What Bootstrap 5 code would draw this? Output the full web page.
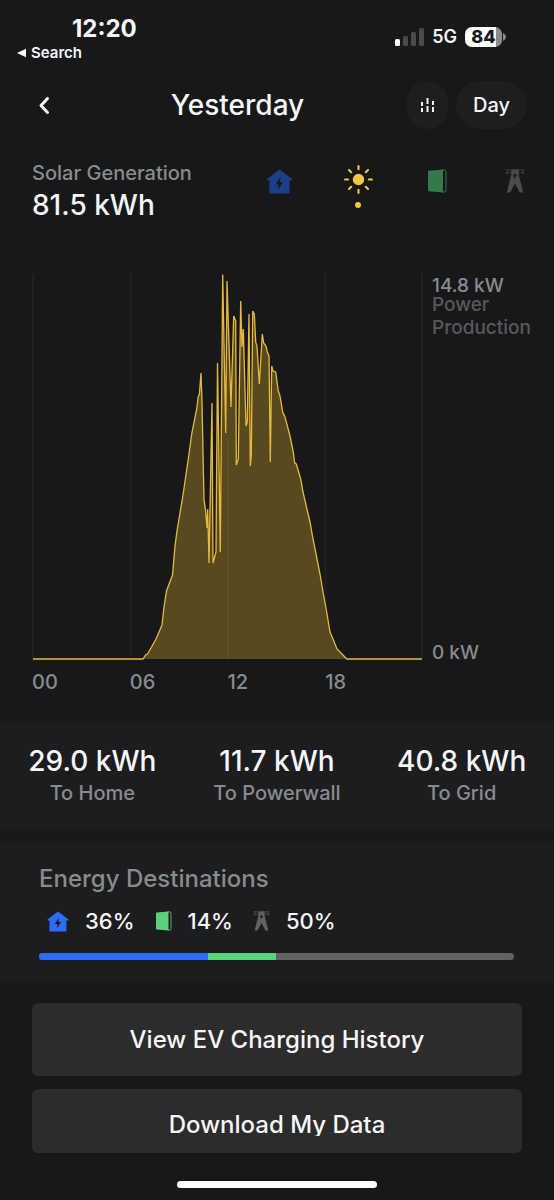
<!DOCTYPE html>
<html lang="en">
<head>
<meta charset="utf-8">
<meta name="viewport" content="width=device-width, initial-scale=1">
<title>Solar Generation</title>
<link href="https://cdn.jsdelivr.net/npm/bootstrap@5.3.0/dist/css/bootstrap.min.css" rel="stylesheet">
<style>
  :root { --ink: #f6f6f7; --dim: #8a8b8d; --faint: #58595b; --panel: #1c1d1f; --sun: #f4c443; }
  body { background: #17181a; color: var(--ink); font-family: Inter, "Liberation Sans", sans-serif; font-weight: 500; }
  svg { display: block; }
  .dim { color: var(--dim); }
  .faint { color: var(--faint); }
  .status { padding: 17px 48px 0 16px; }
  .clock { font-size: 24px; line-height: 24px; font-weight: 700; padding-left: 56px; }
  .back-app { font-size: 15px; line-height: 24px; font-weight: 600; color: var(--ink); }
  .net { font-size: 18px; line-height: 20px; font-weight: 600; }
  .battery { width: 37px; height: 20px; border-radius: 7px; background: linear-gradient(90deg, #fff 84%, #8c8c8e 84%); color: #17181a; font-size: 18px; line-height: 20px; font-weight: 800; }
  .nub { margin-left: 1px; }
  .topbar { display: grid; grid-template-columns: 36px 1fr auto; padding: 16px 27px 0 32px; }
  .topbar h1 { font-size: 28px; line-height: 48px; font-weight: 500; }
  .pill { height: 48px; border-radius: 24px; background: #1d1e20; color: var(--ink); font-size: 20px; font-weight: 500; border: 0; }
  .pill:hover { background: #2c2c2c; color: var(--ink); }
  .pill-icon { width: 41px; }
  .pill-day { width: 71px; }
  .summary { padding: 32px 0 0 32px; }
  .label-md { font-size: 20px; line-height: 24px; }
  .value { font-size: 28px; line-height: 40px; }
  .sources { width: 60%; }
  .source { flex: 1 1 0; border: 0; background: none; height: 56px; }
  .off { opacity: .55; }
  .dot { width: 6px; height: 6px; border-radius: 50%; background: var(--sun); }
  .chart { display: grid; grid-template-columns: 1fr 122px; column-gap: 9px; padding: 49px 0 0 32px; }
  .scale { font-size: 19px; line-height: 23px; padding-top: 5px; }
  .scale .edge { line-height: 14px; }
  .hours { font-size: 20px; line-height: 24px; padding-top: 10px; }
  .panel { background: var(--panel); }
  .totals { margin-top: 29px; padding: 18px 0 24px; }
  .dest { margin-top: 14px; padding: 23px 40px 23px 39px; }
  .dest h2 { font-size: 24px; line-height: 26px; }
  .share { font-size: 22px; line-height: 28px; margin-top: 15px; }
  .share-next { margin-left: 20px; }
  .split { height: 7px; border-radius: 4px; background: #626262; margin-top: 18px; }
  .actions { padding: 20px 32px 28px; row-gap: 13px; }
  .act { background: #2c2c2c; color: var(--ink); border: 0; border-radius: 6px; font-size: 24px; font-weight: 500; line-height: 22px; padding: 26px 12px 25px; }
  .act:hover { background: #363636; color: var(--ink); }
  .act-short { padding: 25px 12px 17px; }
  .homebar { width: 36%; height: 7px; border-radius: 4px; background: #fff; margin-bottom: 10px; }
</style>
</head>
<body>
<svg width="0" height="0" class="position-absolute" aria-hidden="true">
  <symbol id="house" viewBox="0 0 24 24"><path fill="currentColor" fill-rule="evenodd" d="M12 .5 24 9.600v1.200h-2.400V23.500H2.200V10.800H0V9.600ZM13.200 7.500 8.300 14.800h3.100l-.8 5 5-7.300h-3.200Z"/></symbol>
  <symbol id="wall" viewBox="0 0 20 24"><path fill="currentColor" d="M1 2.600Q1 1.900 1.800 1.800L16 .6V23.400L1.800 22.200Q1 22.100 1 21.400Z"/><path fill="none" stroke="currentColor" stroke-width="1" d="M15 1h2.200q1.800 0 1.800 1.800v18.400q0 1.800-1.800 1.800H15"/></symbol>
  <symbol id="tower" viewBox="0 0 20 24"><path fill="currentColor" fill-rule="evenodd" d="M6.300.5h7.400v5.200L18.300 23.500h-3.600L10 14.500 5.300 23.500H1.700L6.300 5.700ZM10.800 2.800 7.600 7.600h2l-.6 3.200 3.200-4.800h-2Z"/><path stroke="currentColor" stroke-width=".7" d="M.5 1h19M.5 3.700h19M2 .5v5M18 .5v5"/></symbol>
</svg>

<div class="status d-flex justify-content-between align-items-center">
  <div>
    <div class="clock">12:20</div>
    <a href="#" class="back-app d-flex align-items-center gap-1 text-decoration-none">
      <svg width="11" height="10" viewBox="0 0 11 10" fill="currentColor" aria-hidden="true"><path d="M1 5 10 .8v8.400Z"/></svg>Search</a>
  </div>
  <div class="d-flex align-items-center mb-2">
    <svg width="29" height="18" viewBox="0 0 29 18" aria-label="Signal"><rect x="0" y="11" width="5" height="7" rx="1.500" fill="#fff"/><g fill="#4a4b4d"><rect x="8" y="8" width="5" height="10" rx="1.500"/><rect x="16" y="4" width="5" height="14" rx="1.500"/><rect x="24" y="0" width="5" height="18" rx="1.500"/></g></svg>
    <span class="net ms-2">5G</span>
    <span class="battery ms-2 text-center">84</span>
    <svg width="3" height="8" viewBox="0 0 3 8" class="nub" fill="#8c8c8e" aria-hidden="true"><path d="M0 0q3 1.500 3 4t-3 4Z"/></svg>
  </div>
</div>

<header class="topbar align-items-center">
  <a href="#" class="text-reset" aria-label="Back"><svg width="24" height="24" viewBox="0 0 24 24" fill="none" stroke="currentColor" stroke-width="3" stroke-linecap="round" stroke-linejoin="round"><path d="m15.500 5.500-6.500 7 6.500 7"/></svg></a>
  <h1 class="m-0 text-center">Yesterday</h1>
  <div class="d-flex justify-content-end gap-2">
    <button type="button" class="pill pill-icon btn p-0 d-flex align-items-center justify-content-center" aria-label="Chart style"><svg width="15" height="16" viewBox="0 0 15 16" stroke="currentColor" stroke-width="2" fill="none"><path d="M2 5v4M2 11v4M7.500 1v6M7.500 9v6M13 4v4M13 10v5"/></svg></button>
    <button type="button" class="pill pill-day btn p-0">Day</button>
  </div>
</header>

<main>
  <section class="summary d-flex justify-content-between">
    <div>
      <div class="label-md dim text-nowrap">Solar Generation</div>
      <div class="value text-nowrap">81.5 kWh</div>
    </div>
    <div class="sources d-flex">
      <button type="button" class="source p-0 d-flex flex-column align-items-center" aria-label="Home" style="color:#2360e0"><svg class="off mt-2" width="25" height="25"><use href="#house"/></svg></button>
      <button type="button" class="source p-0 d-flex flex-column align-items-center" aria-label="Solar" aria-pressed="true">
        <svg class="mt-1" width="29" height="29" viewBox="0 0 28 28" stroke="#f4c443" stroke-width="2" stroke-linecap="round"><circle cx="14" cy="14" r="4.500" fill="#f4c443"/><path d="M14 1v3M14 24v3M1 14h3M24 14h3M4.800 4.800l2.200 2.200M21 21l2.200 2.200M4.800 23.200 7 21M21 7l2.200-2.200"/></svg>
        <span class="dot mt-2"></span></button>
      <button type="button" class="source p-0 d-flex flex-column align-items-center" aria-label="Powerwall" style="color:#4fc774"><svg class="off mt-2" width="20" height="24"><use href="#wall"/></svg></button>
      <button type="button" class="source p-0 d-flex flex-column align-items-center" aria-label="Grid" style="color:#747577"><svg class="off mt-2" width="20" height="24"><use href="#tower"/></svg></button>
    </div>
  </section>

  <section class="chart">
    <svg class="w-100" viewBox="32 275 391 386" role="img" aria-label="Power production over the day">
      <path d="M33 275v385M130.500 275v385M325.500 275v385M422 275v385" stroke="#202123" stroke-width="2"/>
      <path fill="#584a1f" stroke="#e8b93e" stroke-width="1.300" d="M33 660H143L145.500 656 147.500 655 151 649 156 640 162 626 164 608 166.500 592 172.500 576 175 547 177 532 183 496 188.300 460 191.700 435 196.700 410 198.300 397 199.300 396 201 374 202 403 203.500 478 204 500 205.700 513 207 529 207.700 510 209 564 212 404 213 564 216 553 217.500 364 220.300 553 222.700 275.500 225.700 434 227 282 231 408 233.700 317 235.700 322 236.300 466 238.300 460 240.700 302 242 348 243.300 330 246 427 247.300 423 249 315 250.300 467 251.300 457 252.700 312 254.300 315 255.700 343 257 347 259.300 385 262.300 335 263.700 344 266 347 267.300 353 269 357 270.300 463 271.700 367 273 372 275.700 373 278.300 392 280 397 282.700 413 285 418 290 437 293.300 453 294.700 464 296.300 465 300.700 480 303 493 310 523 313 540 317 560 320 575 323 593 326.700 613 330 633 333 640 337 650 343 656 346.700 660H422"/>
      <path d="M228 440v220" stroke="#60522b" stroke-width="1.500"/>
    </svg>
    <div class="scale d-flex flex-column justify-content-between">
      <div>
        <div class="edge dim">14.8 kW</div>
        <div class="faint">Power Production</div>
      </div>
      <div class="dim edge">0 kW</div>
    </div>
    <div class="hours dim d-flex">
      <span class="col-3">00</span><span class="col-3">06</span><span class="col-3">12</span><span class="col-3">18</span>
    </div>
  </section>

  <section class="panel totals">
    <div class="row g-0 text-center">
      <div class="col-4"><div class="value">29.0 kWh</div><div class="label-md dim">To Home</div></div>
      <div class="col-4"><div class="value">11.7 kWh</div><div class="label-md dim">To Powerwall</div></div>
      <div class="col-4"><div class="value">40.8 kWh</div><div class="label-md dim">To Grid</div></div>
    </div>
  </section>

  <section class="panel dest">
    <h2 class="dim m-0">Energy Destinations</h2>
    <div class="share d-flex align-items-center ps-2">
      <svg width="22" height="21" style="color:#2e6bf6"><use href="#house"/></svg><span class="ms-3">36%</span>
      <svg class="share-next" width="17" height="20" style="color:#5dd07b"><use href="#wall"/></svg><span class="ms-3">14%</span>
      <svg class="share-next" width="17" height="20" style="color:#626262"><use href="#tower"/></svg><span class="ms-3">50%</span>
    </div>
    <div class="split d-flex overflow-hidden">
      <div style="width:35.600%;background:#2e6bf6"></div><div style="width:14.300%;background:#5dd07b"></div>
    </div>
  </section>

  <section class="actions d-grid">
    <button type="button" class="act btn">View EV Charging History</button>
    <button type="button" class="act act-short btn"><span class="d-block overflow-hidden">Download My Data</span></button>
  </section>
</main>
<div class="homebar mx-auto"></div>
<script src="https://cdn.jsdelivr.net/npm/bootstrap@5.3.0/dist/js/bootstrap.bundle.min.js"></script>
</body>
</html>
